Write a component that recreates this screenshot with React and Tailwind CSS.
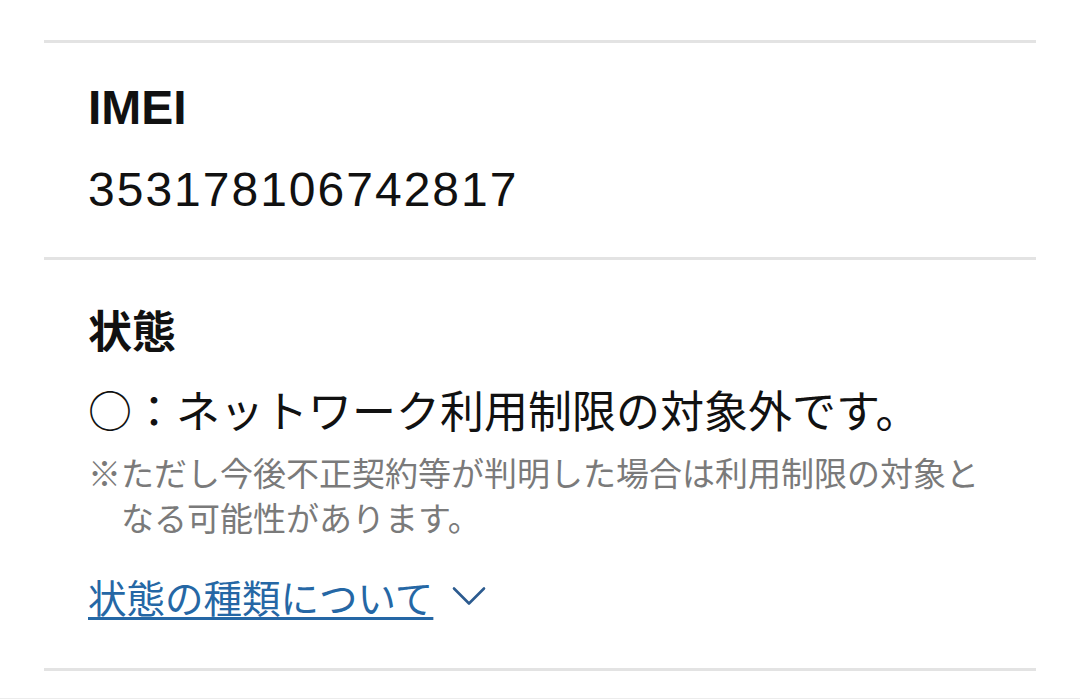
import { ChevronDown } from 'lucide-react';

const jp = { fontFamily: '"Noto Sans CJK JP", "Noto Sans", sans-serif' };
const latin = { fontFamily: '"Liberation Sans", "Noto Sans CJK JP", sans-serif' };

const Section = ({ children, className = '' }) => (
  <div className={`border-b-[3px] border-[#e3e3e3] pl-[44px] ${className}`}>{children}</div>
);

export default function App() {
  return (
    <div className="w-[1080px] h-[699px] bg-white overflow-hidden text-[#111]" style={jp}>
      <div className="px-[44px] pt-[40px]">
        <div className="h-[3px] bg-[#e3e3e3]" />

        {/* IMEI */}
        <Section className="pt-[32px] pb-[34px]">
          <h3 className="text-[48px] leading-[66px] font-bold" style={latin}>IMEI</h3>
          <p className="mt-[16px] text-[48px] leading-[66px] tracking-[2px]" style={latin}>353178106742817</p>
        </Section>

        {/* 状態 */}
        <Section className="pt-[36px] pb-[44px]">
          <h3 className="text-[44px] leading-[66px] font-bold">状態</h3>
          <p className="mt-[14px] text-[44px] leading-[66px]">○：ネットワーク利用制限の対象外です。</p>
          <p className="mt-[8px] text-[33px] leading-[45px] text-[#7a7a7a] pl-[33px] -indent-[33px] w-[920px]">
            ※ただし今後不正契約等が判明した場合は利用制限の対象となる可能性があります。
          </p>
          <div className="mt-[28px] flex items-center h-[56px]">
            <a className="text-[38.5px] leading-[56px] text-[#2567a5] underline decoration-[3px] underline-offset-[4px]">
              状態の種類について
            </a>
            <ChevronDown className="ml-[6px] w-[60px] h-[60px] text-[#2c5b8f]" strokeWidth={1.05} />
          </div>
        </Section>
      </div>
      <div className="mt-[27px] h-[2px] bg-[#ececec]" />
    </div>
  );
}
